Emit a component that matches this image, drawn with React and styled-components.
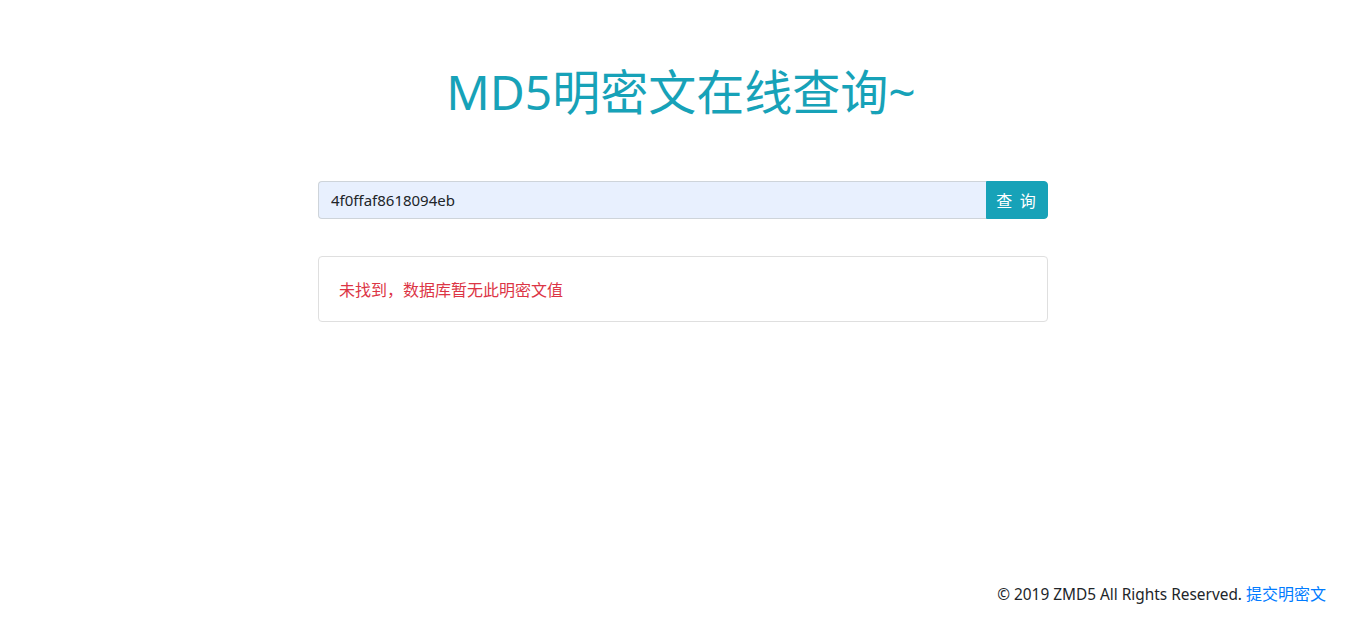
import React from "react";
import styled, { createGlobalStyle } from "styled-components";

const Global = createGlobalStyle`
  html, body { margin: 0; padding: 0; background: #fff; }
  body {
    font-family: "Noto Sans", "Open Sans", "Noto Sans CJK SC", sans-serif;
    color: #212529;
    font-size: 16px;
    line-height: 1.5;
  }
  * { box-sizing: border-box; }
`;

const Page = styled.div`
  min-height: 620px;
  height: 100vh;
  display: flex;
  flex-direction: column;
  align-items: center;
`;

const Title = styled.h1`
  margin: 63px 0 0 -4px;
  font-size: 48px;
  font-weight: 400;
  line-height: 1.2;
  color: #17a2b8;
  font-family: "Noto Sans", "Noto Sans CJK SC", sans-serif;
`;

const Main = styled.div`
  width: 730px;
  margin-top: 60px;
  display: flex;
  flex-direction: column;
  gap: 37px;
`;

const SearchGroup = styled.form`
  display: flex;
  height: 38px;
`;

const Input = styled.input`
  flex: 1;
  height: 38px;
  padding: 0 12px;
  border: 1px solid #ced4da;
  border-right: none;
  border-radius: 4px 0 0 4px;
  background: #e8f0fe;
  color: #212529;
  font-size: 15px;
  font-family: "Noto Sans", "Noto Sans CJK SC", sans-serif;
  outline: none;
`;

const Button = styled.button`
  width: 62px;
  height: 38px;
  border: 1px solid #17a2b8;
  background: #17a2b8;
  color: #fff;
  border-radius: 0 4px 4px 0;
  font-size: 16px;
  font-family: "Noto Sans CJK SC", sans-serif;
  letter-spacing: 2px;
  padding: 0;
  cursor: pointer;
`;

const Card = styled.div`
  border: 1px solid #dfdfdf;
  border-radius: 4px;
  padding: 20px 20px;
`;

const Result = styled.p`
  margin: 0;
  color: #dc3545;
  font-size: 16px;
  line-height: 24px;
  font-family: "Noto Sans CJK SC", sans-serif;
`;

const Footer = styled.footer`
  margin-top: auto;
  align-self: stretch;
  text-align: right;
  padding: 0 40px 14px 0;
  font-size: 15.4px;
  color: #212529;
`;

const Link = styled.a`
  color: #007bff;
  text-decoration: none;
  font-size: 16px;
  font-family: "Noto Sans CJK SC", sans-serif;
`;

export default function App() {
  return (
    <>
      <Global />
      <Page>
        <Title>MD5明密文在线查询~</Title>
        <Main>
          <SearchGroup onSubmit={(e) => e.preventDefault()}>
            <Input defaultValue="4f0ffaf8618094eb" />
            <Button type="submit">查 询</Button>
          </SearchGroup>
          <Card>
            <Result>未找到，数据库暂无此明密文值</Result>
          </Card>
        </Main>
        <Footer>
          © 2019 ZMD5 All Rights Reserved. <Link href="#">提交明密文</Link>
        </Footer>
      </Page>
    </>
  );
}
